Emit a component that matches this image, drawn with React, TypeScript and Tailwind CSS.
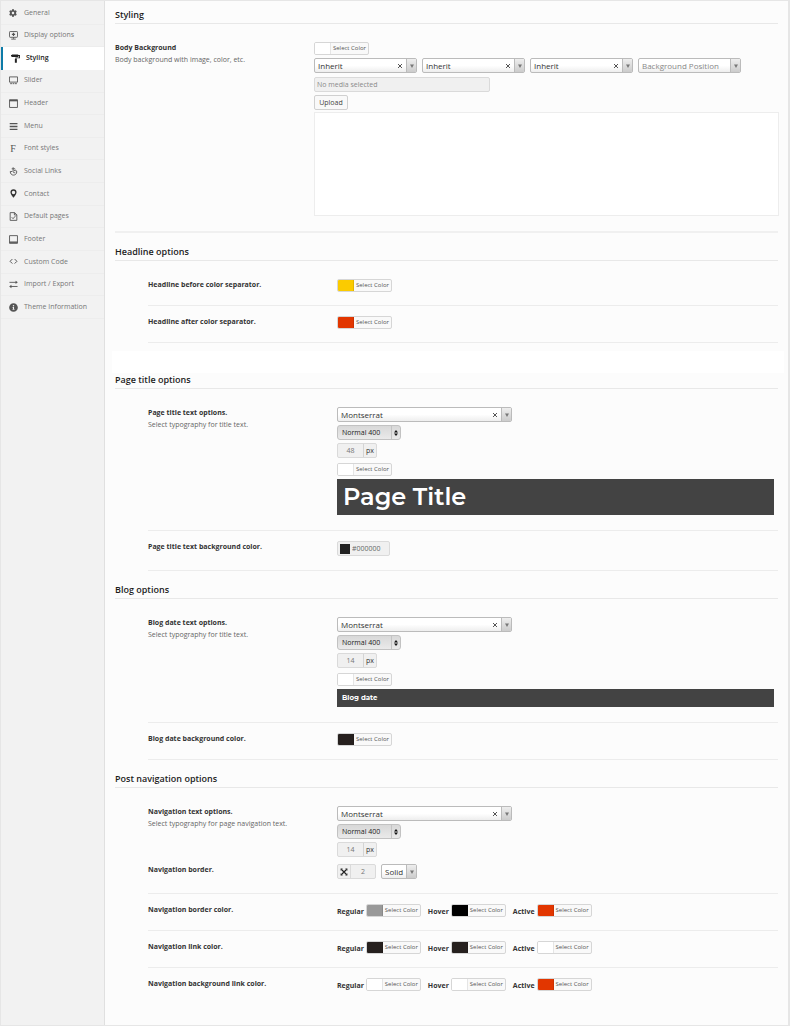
import type { ReactNode } from "react";
import { FaCog, FaInfoCircle } from "react-icons/fa";

const stroke = {
  viewBox: "0 0 10 10",
  fill: "none",
  stroke: "currentColor",
  strokeWidth: 1,
  className: "size-[9px]",
  "aria-hidden": true,
} as const;

const icons: Record<string, ReactNode> = {
  General: <FaCog className="size-[8px]" aria-hidden />,
  "Display options": (
    <svg {...stroke}>
      <rect x="0.5" y="0.6" width="9" height="6.4" rx="0.8" />
      <path d="M5 2v3.6M3.2 3.8h3.6" strokeWidth="1.3" />
      <path d="M5 7v1.600M2.500 9h5" />
    </svg>
  ),
  Styling: (
    <svg viewBox="0 0 10 10" fill="currentColor" className="size-[9px]" aria-hidden>
      <path d="M1 0.500h7v2.800H1zM0 1.100h1v1.600H0zM8 1.200h2v3.500H6.100v0.900H6.500V9.800H4.300V5.600H4.900V3.800H9V2.400H8z" />
    </svg>
  ),
  Slider: (
    <svg {...stroke}>
      <path d="M0.500 1h9v5.800h-9z" />
      <path d="M1.300 8.500h2M4 8.500h2M6.700 8.500h2" />
    </svg>
  ),
  Header: (
    <svg {...stroke}>
      <path d="M0.600 0.800h8.800v8.600H0.600z" />
      <path d="M0.600 1.800h8.800" strokeWidth="1.600" />
    </svg>
  ),
  Menu: (
    <svg {...stroke} strokeWidth={1.5}>
      <path d="M0.800 1.800h8.600M0.800 5h8.600M0.800 8.200h8.600" />
    </svg>
  ),
  "Font styles": <span className="font-['Liberation_Serif',serif] text-[10px] leading-none">F</span>,
  "Social Links": (
    <svg {...stroke}>
      <path d="M3.600 5H1.400C1.400 7.600 3 9 5 9s3.600-1.500 3.600-3.500S7.200 3 5.600 4.200" />
      <path d="M4.600 0.300v5.200M3 2h3.800M4.600 5.800c0.800 1 2 0.800 2.200-0.400" />
    </svg>
  ),
  Contact: (
    <svg viewBox="0 0 10 10" fill="currentColor" className="size-[9px] text-[#333]" aria-hidden>
      <path
        fillRule="evenodd"
        d="M5 0.300a3.400 3.400 0 0 0-3.400 3.400C1.600 6 5 9.800 5 9.800S8.400 6 8.400 3.700A3.400 3.400 0 0 0 5 0.300zM5 1.900a1.900 1.900 0 1 1 0 3.800A1.900 1.900 0 0 1 5 1.900z"
      />
    </svg>
  ),
  "Default pages": (
    <svg {...stroke}>
      <path d="M1.300 0.700h5l2.400 2.400v6.200H1.300zM6 0.700v2.600h2.600M3 5.800l1.500 1.600L7 4.600" />
    </svg>
  ),
  Footer: (
    <svg {...stroke}>
      <path d="M0.600 0.700h8.800v8.600H0.600z" />
      <path d="M0.600 8h8.800" strokeWidth="1.600" />
    </svg>
  ),
  "Custom Code": (
    <svg {...stroke} strokeWidth={1.1}>
      <path d="M3.700 2.300L1.200 4.800l2.500 2.500M6.300 2.300l2.500 2.500-2.500 2.500" />
    </svg>
  ),
  "Import / Export": (
    <svg {...stroke}>
      <path d="M0.500 2.600h8M9.500 7.200h-8" />
      <path d="M7.300 0.700L9.800 2.600 7.300 4.500zM2.700 5.300L0.200 7.200 2.700 9.100z" fill="currentColor" stroke="none" />
    </svg>
  ),
  "Theme Information": <FaInfoCircle className="size-[9px]" aria-hidden />,
};

function Sidebar() {
  return (
    <nav className="w-[104px] shrink-0 border-r border-[#e0e0e0] bg-[#f2f2f2] pt-px">
      <ul className="grid h-[317px] auto-rows-fr">
        {Object.entries(icons).map(([name, icon]) => {
          const active = name === "Styling";
          return (
            <li key={name}>
              <a
                href="#"
                className={
                  active
                    ? "flex h-full items-center gap-[5px] border-l-2 border-[#0d7ba8] bg-white pl-[6px] font-semibold text-[#222]"
                    : "flex h-full items-center gap-[5px] border-b border-[#ededed] pl-[6px] text-[#777]"
                }
              >
                <span
                  className={
                    active
                      ? "flex w-[12px] justify-center text-[#222]"
                      : "flex w-[12px] justify-center text-[#555]"
                  }
                >
                  {icon}
                </span>
                {name}
              </a>
            </li>
          );
        })}
      </ul>
    </nav>
  );
}

function ColorButton({ color, name }: { color: string; name: string }) {
  return (
    <button
      type="button"
      aria-label={`${name}: Select Color`}
      className="flex h-[13px] w-[55px] overflow-hidden rounded-[2px] border border-[#d6d6d6] bg-[#f9f9f9] text-[6px] leading-[11px] text-[#555]"
    >
      <span className={`w-[16px] shrink-0 self-stretch border-r border-black/10 ${color}`} />
      <span className="flex-1 whitespace-nowrap text-center">Select Color</span>
    </button>
  );
}

function Combo({
  value,
  name,
  width,
  clear = true,
  muted = false,
}: {
  value: string;
  name: string;
  width: string;
  clear?: boolean;
  muted?: boolean;
}) {
  return (
    <div
      className={`flex h-[15px] items-stretch overflow-hidden rounded-[2px] border border-[#bbbbbb] bg-linear-to-b from-white from-50% to-[#eeeeee] ${width}`}
    >
      <select
        aria-label={name}
        className={`min-w-0 flex-1 appearance-none bg-transparent pl-[3px] text-[8px] leading-[13px] outline-none ${muted ? "text-[#888]" : "text-[#333]"}`}
      >
        <option>{value}</option>
      </select>
      {clear && (
        <button type="button" aria-label={`Clear ${name}`} className="flex w-[12px] items-center justify-center text-[#555]">
          <svg viewBox="0 0 4 4" className="mt-px size-[4px]" stroke="currentColor" strokeWidth="1" aria-hidden>
            <path d="M0 0l4 4M4 0L0 4" />
          </svg>
        </button>
      )}
      <span className="flex w-[10px] shrink-0 items-center justify-center border-l border-[#bbbbbb] bg-linear-to-b from-[#eeeeee] to-[#cccccc] text-[#777]">
        <svg viewBox="0 0 4 4" className="size-[4px]" fill="currentColor" aria-hidden>
          <path d="M0 0.500h4L2 4z" />
        </svg>
      </span>
    </div>
  );
}

function Weight({ name }: { name: string }) {
  return (
    <div className="mt-[3px] flex h-[15px] w-[64px] items-stretch rounded-[3px] border border-[#c2c2c2] bg-linear-to-b from-[#d8d8d8] to-[#eaeaea]">
      <select
        aria-label={name}
        className="min-w-0 flex-1 appearance-none bg-transparent pl-1 text-[7px] font-medium leading-[13px] text-[#222] outline-none"
      >
        <option>Normal 400</option>
      </select>
      <span className="flex w-[9px] shrink-0 items-center justify-center border-l border-[#c4c4c4] text-[#111]">
        <svg viewBox="0 0 4 6" className="h-[6px] w-[4px]" fill="currentColor" aria-hidden>
          <path d="M0 2.400L2 0l2 2.400zM0 3.600h4L2 6z" />
        </svg>
      </span>
    </div>
  );
}

function Size({ value, name }: { value: string; name: string }) {
  return (
    <div className="mt-[3px] flex h-[15px] w-[40px] overflow-hidden rounded-[2px] border border-[#dadada] bg-[#f0f0f0]">
      <input
        aria-label={name}
        defaultValue={value}
        className="w-[25px] min-w-0 text-center text-[7px] leading-[13px] text-[#777] outline-none"
      />
      <span className="flex-1 border-l border-[#d4d4d4] text-center text-[7px] leading-[13px] text-[#333]">px</span>
    </div>
  );
}

function Typography({ size, name }: { size: string; name: string }) {
  return (
    <>
      <Combo value="Montserrat" name={`${name} font`} width="w-[175px]" />
      <Weight name={`${name} weight`} />
      <Size value={size} name={`${name} size`} />
    </>
  );
}

function Heading({ children }: { children: string }) {
  return (
    <h2 className="border-b border-[#e8e8e8] text-[9px] font-semibold leading-[17px] text-[#1c1c1c]">{children}</h2>
  );
}

function Caption({ title, note }: { title: string; note?: string }) {
  return (
    <div>
      <h3 className="text-[7px] font-bold leading-[11px] text-[#333]">{title}</h3>
      {note && <p className="mt-px text-[7px] leading-[12px] text-[#666]">{note}</p>}
    </div>
  );
}

function Row({
  title,
  note,
  pad,
  children,
}: {
  title: string;
  note?: string;
  pad: string;
  children: ReactNode;
}) {
  return (
    <div className={`ml-[33px] grid grid-cols-[189px_minmax(0,1fr)] border-[#ececec] ${pad}`}>
      <Caption title={title} note={note} />
      <div>{children}</div>
    </div>
  );
}

function States({ name, colors }: { name: string; colors: [string, string, string] }) {
  return (
    <div className="flex h-[13px] gap-[7px]">
      {["Regular", "Hover", "Active"].map((state, i) => (
        <div key={state} className="flex gap-[2px]">
          <span className="text-[7px] font-bold leading-[15px] text-[#333]">{state}</span>
          <ColorButton color={colors[i]} name={`${name} ${state}`} />
        </div>
      ))}
    </div>
  );
}

export default function App() {
  return (
    <div className="flex min-h-screen border border-r-2 border-[#e6e6e6] bg-[#fcfcfc] font-['Open_Sans',sans-serif] text-[7px]">
      <Sidebar />
      <main className="min-w-0 flex-1 px-[10px] pb-[20px] pt-[5px]">
        <section>
          <Heading>Styling</Heading>
          <div className="grid grid-cols-[199px_minmax(0,1fr)] border-b-2 border-[#f0f0f0] pb-[15px] pt-[18px]">
            <Caption title="Body Background" note="Body background with image, color, etc." />
            <div>
              <ColorButton color="bg-white" name="Body Background" />
              <div className="mt-[3px] flex gap-[5px]">
                <Combo value="Inherit" name="Background Repeat" width="w-[103px]" />
                <Combo value="Inherit" name="Background Size" width="w-[103px]" />
                <Combo value="Inherit" name="Background Attachment" width="w-[103px]" />
                <Combo value="Background Position" name="Background Position" width="w-[103px]" clear={false} muted />
              </div>
              <input
                aria-label="Background media"
                placeholder="No media selected"
                readOnly
                className="mt-[4px] block h-[15px] w-[176px] rounded-[2px] border border-[#dadada] bg-[#f0f0f0] px-[2px] text-[7px] leading-[13px] outline-none placeholder:text-[#8a8a8a]"
              />
              <button
                type="button"
                className="mt-[3px] block h-[15px] w-[34px] rounded-[2px] border border-[#d0d0d0] bg-[#f9f9f9] text-[7px] leading-[13px] text-[#444]"
              >
                Upload
              </button>
              <div className="-mr-px mt-[2px] h-[104px] border border-[#ededed] bg-white" />
            </div>
          </div>
        </section>

        <section className="mt-[10px]">
          <Heading>Headline options</Heading>
          <Row title="Headline before color separator." pad="pt-[18px] pb-[13px] border-b">
            <ColorButton color="bg-[#fbcb00]" name="Headline before" />
          </Row>
          <Row title="Headline after color separator." pad="pt-[10px] pb-[13px] border-b">
            <ColorButton color="bg-[#e23600]" name="Headline after" />
          </Row>
        </section>
        <div className="-ml-[3px] -mr-[6px] -mb-[2px] mt-[8px] h-[22px] bg-white" />

        <section>
          <Heading>Page title options</Heading>
          <Row title="Page title text options." note="Select typography for title text." pad="pt-[18px] pb-[15px] border-b">
            <Typography size="48" name="Page title" />
            <div className="mt-[5px]">
              <ColorButton color="bg-white" name="Page title" />
            </div>
            <div className="mr-[4px] mt-[3px] bg-[#434343] px-[6px] font-[Montserrat,Inter,sans-serif] text-[24px] font-semibold leading-[36px] text-white">
              Page Title
            </div>
          </Row>
          <Row title="Page title text background color." pad="pt-[10px] pb-[14px] border-b">
            <div className="flex h-[15px] w-[53px] items-center gap-[2px] rounded-[2px] border border-[#dadada] bg-[#f0f0f0] pl-[2px]">
              <span className="size-[10px] shrink-0 bg-[#222]" />
              <input
                aria-label="Page title background color"
                defaultValue="#000000"
                className="w-full min-w-0 text-[7px] leading-[13px] text-[#666] outline-none"
              />
            </div>
          </Row>
        </section>

        <section className="mt-[10px]">
          <Heading>Blog options</Heading>
          <Row title="Blog date text options." note="Select typography for title text." pad="pt-[18px] pb-[15px] border-b">
            <Typography size="14" name="Blog date" />
            <div className="mt-[5px]">
              <ColorButton color="bg-white" name="Blog date" />
            </div>
            <div className="mr-[4px] mt-[3px] bg-[#434343] px-[5px] font-[Montserrat,Inter,sans-serif] text-[7px] font-bold leading-[18px] text-white">
              Blog date
            </div>
          </Row>
          <Row title="Blog date background color." pad="pt-[10px] pb-[13px] border-b">
            <ColorButton color="bg-[#26201e]" name="Blog date background" />
          </Row>
        </section>

        <section className="mt-[10px]">
          <Heading>Post navigation options</Heading>
          <Row title="Navigation text options." note="Select typography for page navigation text." pad="pt-[18px]">
            <Typography size="14" name="Navigation" />
          </Row>
          <Row title="Navigation border." pad="pt-[7px] pb-[14px] border-b">
            <div className="flex gap-[5px]">
              <div className="flex h-[15px] w-[39px] overflow-hidden rounded-[2px] border border-[#dadada] bg-[#f0f0f0]">
                <span className="flex w-[13px] shrink-0 items-center justify-center border-r border-[#dadada] text-[#222]">
                  <svg viewBox="0 0 8 8" className="size-[8px]" fill="currentColor" aria-hidden>
                    <path d="M1.500 1.500l5 5M6.500 1.500l-5 5" stroke="currentColor" strokeWidth="1.200" />
                    <path d="M0.600 0.600h2.200L0.600 2.800zM7.400 0.600v2.200L5.200 0.600zM0.600 7.400V5.200l2.200 2.200zM7.400 7.400H5.200L7.400 5.200z" />
                  </svg>
                </span>
                <input
                  aria-label="Navigation border width"
                  defaultValue="2"
                  className="w-full min-w-0 text-center text-[7px] leading-[13px] text-[#777] outline-none"
                />
              </div>
              <Combo value="Solid" name="Navigation border style" width="w-[36px]" clear={false} />
            </div>
          </Row>
          <Row title="Navigation border color." pad="pt-[10px] pb-[13px] border-b">
            <States name="Border" colors={["bg-[#999]", "bg-black", "bg-[#e23600]"]} />
          </Row>
          <Row title="Navigation link color." pad="pt-[10px] pb-[13px] border-b">
            <States name="Link" colors={["bg-[#26201e]", "bg-[#26201e]", "bg-white"]} />
          </Row>
          <Row title="Navigation background link color." pad="pt-[10px]">
            <States name="Background" colors={["bg-white", "bg-white", "bg-[#e23600]"]} />
          </Row>
        </section>
      </main>
    </div>
  );
}
